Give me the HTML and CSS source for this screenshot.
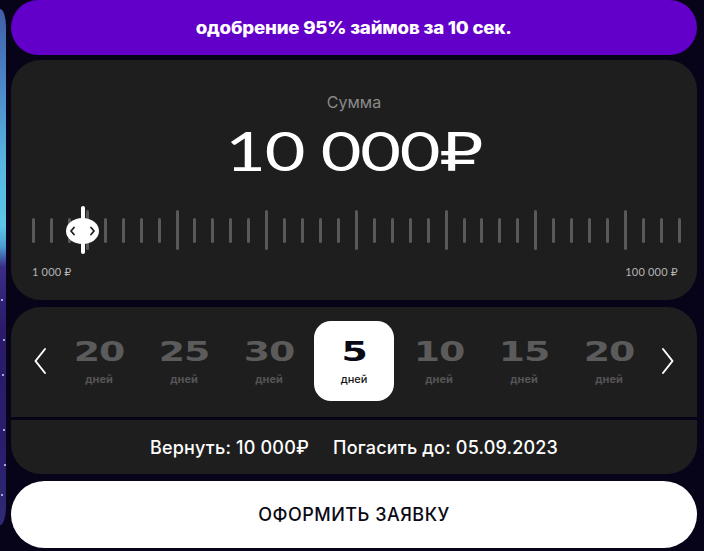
FILE: index.html
```html
<!DOCTYPE html>
<html lang="ru">
<head>
<meta charset="utf-8">
<title>Займ</title>
<link rel="stylesheet" href="styles.css">
</head>
<body>
<div class="page">
  <div class="side-slide">
    <span class="star s1"></span><span class="star s2"></span><span class="star s3"></span><span class="star s4"></span><span class="star s5"></span><span class="star s6"></span>
  </div>
  <main class="calc">
    <div class="promo"><span class="promo-text">одобрение 95% займов за 10 сек.</span></div>

    <section class="card amount">
      <div class="amount-label">Сумма</div>
      <div class="amount-value"><span class="amount-num">10 000₽</span></div>
      <div class="scale">
        <div class="ticks">
          <span class="tick"></span><span class="tick"></span><span class="tick"></span><span class="tick long"></span><span class="tick"></span>
          <span class="tick"></span><span class="tick"></span><span class="tick"></span><span class="tick long"></span><span class="tick"></span>
          <span class="tick"></span><span class="tick"></span><span class="tick"></span><span class="tick long"></span><span class="tick"></span>
          <span class="tick"></span><span class="tick"></span><span class="tick"></span><span class="tick long"></span><span class="tick"></span>
          <span class="tick"></span><span class="tick"></span><span class="tick"></span><span class="tick long"></span><span class="tick"></span>
          <span class="tick"></span><span class="tick"></span><span class="tick"></span><span class="tick long"></span><span class="tick"></span>
          <span class="tick"></span><span class="tick"></span><span class="tick"></span><span class="tick long"></span><span class="tick"></span>
          <span class="tick"></span><span class="tick"></span>
        </div>
        <div class="thumb">
          <span class="needle"></span>
          <span class="knob">
            <svg class="knob-icon" viewBox="0 0 33 26" width="33" height="26" aria-hidden="true">
              <path d="M8 9.5 L5 13 L8 16.5" fill="none" stroke="#1e1e1e" stroke-width="1.8" stroke-linecap="round" stroke-linejoin="round"/>
              <path d="M25 9.5 L28 13 L25 16.5" fill="none" stroke="#1e1e1e" stroke-width="1.8" stroke-linecap="round" stroke-linejoin="round"/>
            </svg>
          </span>
        </div>
      </div>
      <div class="scale-labels"><span>1 000 ₽</span><span>100 000 ₽</span></div>
    </section>

    <section class="card term">
      <button class="arrow" aria-label="Назад">
        <svg viewBox="0 0 14 28" width="14" height="28" aria-hidden="true"><path d="M12 2 L2.5 14 L12 26" fill="none" stroke="#fff" stroke-width="2" stroke-linecap="round" stroke-linejoin="round"/></svg>
      </button>
      <div class="days">
        <div class="day"><span class="day-num">20</span><span class="day-unit">дней</span></div>
        <div class="day"><span class="day-num">25</span><span class="day-unit">дней</span></div>
        <div class="day"><span class="day-num">30</span><span class="day-unit">дней</span></div>
        <div class="day active"><span class="day-num">5</span><span class="day-unit">дней</span></div>
        <div class="day"><span class="day-num">10</span><span class="day-unit">дней</span></div>
        <div class="day"><span class="day-num">15</span><span class="day-unit">дней</span></div>
        <div class="day"><span class="day-num">20</span><span class="day-unit">дней</span></div>
      </div>
      <button class="arrow" aria-label="Вперёд">
        <svg viewBox="0 0 14 28" width="14" height="28" aria-hidden="true"><path d="M2 2 L11.5 14 L2 26" fill="none" stroke="#fff" stroke-width="2" stroke-linecap="round" stroke-linejoin="round"/></svg>
      </button>
    </section>

    <section class="card summary">
      <span>Вернуть: 10 000₽</span>
      <span>Погасить до: 05.09.2023</span>
    </section>

    <button class="submit">ОФОРМИТЬ ЗАЯВКУ</button>
  </main>
</div>
</body>
</html>
```

FILE: styles.css
```css
* { box-sizing: border-box; }

html, body {
  margin: 0;
  padding: 0;
  background: #07041a;
  font-family: "Inter", "Noto Sans", sans-serif;
  color: #fff;
}

.page {
  display: flex;
  gap: 5px;
  width: 704px;
  height: 551px;
  overflow: hidden;
}

.side-slide {
  position: relative;
  flex: 0 0 6px;
  margin-top: 9px;
  height: 516px;
  border-radius: 0 6px 6px 0 / 0 18px 18px 0;
  background: linear-gradient(180deg,
    #3e5ea6 0%,
    #4a80c4 12%,
    #58b6e0 30%,
    #5cc6e8 42%,
    #4d9fd2 46%,
    #3a2c86 50%,
    #2b1a6a 62%,
    #2a1d6c 85%,
    #2e2b74 100%);
}

.star {
  position: absolute;
  width: 2px;
  height: 2px;
  border-radius: 50%;
  background: #d8d4ff;
}
.s1 { top: 290px; left: 1px; }
.s2 { top: 330px; left: 3px; }
.s3 { top: 365px; left: 2px; }
.s4 { top: 420px; left: 3px; }
.s5 { top: 455px; left: 4px; }
.s6 { top: 485px; left: 1px; }

.calc {
  display: flex;
  flex-direction: column;
  width: 686px;
}

.promo {
  height: 55px;
  border-radius: 28px;
  background: #6200ca;
  display: flex;
  align-items: center;
  justify-content: center;
}

.promo-text {
  display: inline-block;
  font-weight: 800;
  font-size: 17px;
  letter-spacing: -0.2px;
  color: #fff;
  transform: scaleX(1.1);
}

.card {
  background: #1e1e1e;
}

.amount {
  margin-top: 5px;
  height: 240px;
  border-radius: 30px;
  padding-top: 32px;
  display: flex;
  flex-direction: column;
}

.amount-label {
  text-align: center;
  font-size: 16px;
  line-height: 20px;
  color: #8a8a8a;
}

.amount-value {
  margin-top: 12px;
  height: 54px;
  text-align: center;
  line-height: 54px;
}

.amount-num {
  display: inline-block;
  font-family: "Lato", "DejaVu Sans", sans-serif;
  font-weight: 400;
  font-size: 54px;
  line-height: 54px;
  transform: scaleX(1.3);
  letter-spacing: -1px;
}

.scale {
  position: relative;
  margin: 28px 16px 0 21px;
  height: 48px;
}

.ticks {
  height: 48px;
  display: flex;
  align-items: center;
  justify-content: space-between;
}

.tick {
  width: 3px;
  height: 25px;
  border-radius: 1.5px;
  background: #595959;
}
.tick.long { height: 40px; }

.thumb {
  position: absolute;
  top: 0;
  left: 34px;
  width: 33px;
  height: 48px;
}

.needle {
  position: absolute;
  left: 14.5px;
  top: 0;
  width: 4px;
  height: 48px;
  border-radius: 2px;
  background: #fff;
}

.knob {
  position: absolute;
  left: 0;
  top: 12px;
  width: 33px;
  height: 26px;
  border-radius: 50%;
  background: #fff;
}

.knob-icon { display: block; }

.scale-labels {
  margin: 11px 19px 0 21px;
  display: flex;
  justify-content: space-between;
  font-family: "Lato", "DejaVu Sans", sans-serif;
  font-size: 11px;
  line-height: 14px;
  letter-spacing: 0.2px;
  color: #b5b5b5;
}

.term {
  margin-top: 7px;
  height: 110px;
  border-radius: 30px 30px 0 0;
  padding: 14px 0 0;
  display: flex;
  justify-content: center;
  align-items: flex-start;
  gap: 7px;
}

.arrow {
  width: 24px;
  height: 80px;
  padding: 0;
  border: 0;
  background: none;
  display: flex;
  align-items: center;
  justify-content: center;
}

.days {
  display: flex;
  gap: 5px;
}

.day {
  width: 80px;
  height: 80px;
  border-radius: 17px;
  display: flex;
  flex-direction: column;
  align-items: center;
  padding-top: 18px;
}

.day-num {
  display: inline-block;
  font-family: "DejaVu Sans", sans-serif;
  font-weight: 700;
  font-size: 27px;
  line-height: 25px;
  color: #5b5b5b;
  transform: scaleX(1.4);
  letter-spacing: -0.8px;
}

.day-unit {
  margin-top: 8px;
  font-size: 11px;
  line-height: 14px;
  font-weight: 700;
  color: #545454;
}

.day.active {
  background: #fff;
}
.day.active .day-num { color: #0b0a14; }
.day.active .day-unit { color: #141414; font-weight: 500; }

.summary {
  margin-top: 3px;
  height: 54px;
  border-radius: 0 0 30px 30px;
  display: flex;
  align-items: center;
  justify-content: center;
  gap: 24px;
  font-size: 18px;
  font-weight: 500;
  letter-spacing: 0.2px;
  color: #fff;
}

.submit {
  margin-top: 7px;
  height: 67px;
  border: 0;
  border-radius: 34px;
  background: #fff;
  font-family: "Inter", "Noto Sans", sans-serif;
  font-size: 18px;
  font-weight: 500;
  letter-spacing: 0.5px;
  color: #0a0a14;
}
```
